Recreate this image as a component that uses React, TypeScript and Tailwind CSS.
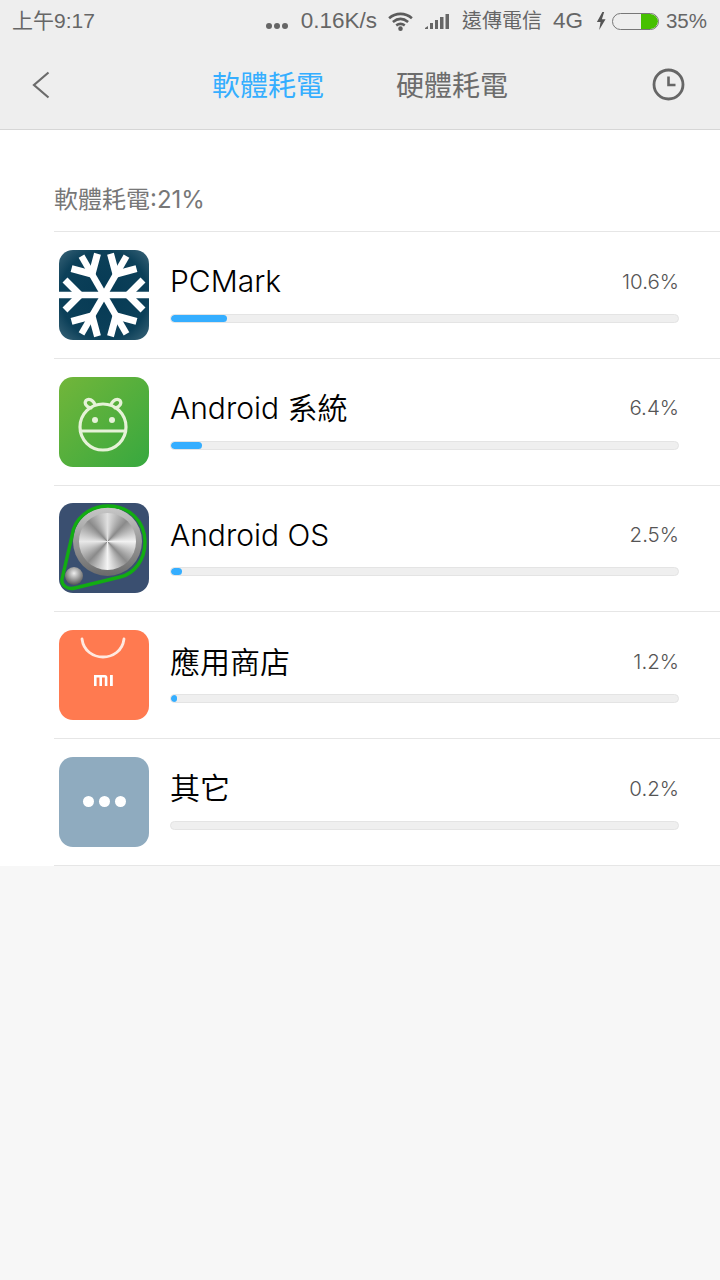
import type { ReactNode } from 'react';

const SnowIcon = () => (
    <svg viewBox="0 0 90 90" className="w-full h-full">
        <defs>
            <radialGradient id="snowBg" cx="50%" cy="50%" r="70%">
                <stop offset="0%" stopColor="#063a54" />
                <stop offset="70%" stopColor="#0c4059" />
                <stop offset="100%" stopColor="#3a6478" />
            </radialGradient>
        </defs>
        <rect width="90" height="90" fill="url(#snowBg)" />
        {[0, 60, 120, 180, 240, 300].map((a) => (
            <g key={a} transform={`rotate(${a} 45 45)`} stroke="#fff" strokeWidth="6.5" fill="none">
                <path d="M45 45H90" />
                <path d="M84 30L69 45L84 60" strokeWidth="7" />
            </g>
        ))}
    </svg>
);

const RobotIcon = () => (
    <svg viewBox="0 0 90 90" className="w-full h-full">
        <defs>
            <linearGradient id="robotBg" x1="0" y1="0" x2="1" y2="1">
                <stop offset="0%" stopColor="#72b63a" />
                <stop offset="100%" stopColor="#37a83f" />
            </linearGradient>
        </defs>
        <rect width="90" height="90" fill="url(#robotBg)" />
        <g stroke="#e6f2d8" strokeWidth="3.2" fill="none" strokeLinecap="round">
            <circle cx="44" cy="50" r="23" />
            <path d="M21.5 54H66.5" />
            <path d="M32 31C27 30 25 26 27 23.5C29.5 21 34 22.5 36 27.5" />
            <path d="M56 31C61 30 63 26 61 23.5C58.5 21 54 22.5 52 27.5" />
        </g>
        <circle cx="36" cy="43" r="3" fill="#e6f2d8" />
        <circle cx="53" cy="43" r="3" fill="#e6f2d8" />
    </svg>
);

const KnobIcon = () => (
    <div className="relative w-full h-full bg-[#3a4f70]">
        <div className="absolute left-[14px] top-[4px] w-[69px] h-[69px] rounded-full bg-[linear-gradient(#c8c8c8,#6a6a6a)] flex items-center justify-center">
            <div className="w-[57px] h-[57px] rounded-full bg-[conic-gradient(#e0e0e0,#8a8a8a_12%,#f2f2f2_25%,#8c8c8c_38%,#f4f4f4_50%,#8a8a8a_62%,#e8e8e8_75%,#8a8a8a_88%,#e0e0e0)]" />
        </div>
        <div className="absolute left-[6px] top-[64px] w-[18px] h-[18px] rounded-full bg-[radial-gradient(circle_at_50%_35%,#eeeeee,#5c5c5c_75%)]" />
        <svg viewBox="0 0 90 90" className="absolute inset-0 w-full h-full">
            <path d="M13 33C15 15 31 3 49 3C70 3 86 18 86 39C86 57 75 71 61 74L16 85C8 87 2 82 3 76Z" fill="none" stroke="#12ad12" strokeWidth="3.4" />
        </svg>
    </div>
);

const StoreIcon = () => (
    <svg viewBox="0 0 90 90" className="w-full h-full">
        <rect width="90" height="90" fill="#ff7a50" />
        <path d="M23 9C26 33 62 33 65 9" fill="none" stroke="#ffe9e0" strokeWidth="2.8" strokeLinecap="round" />
        <path d="M35 45H46C47.5 45 48.4 46 48.4 47.5V56H45.8V47.6H43V56H40.4V47.6H37.6V56H35Z" fill="#fff" />
        <rect x="51" y="45" width="2.8" height="11" fill="#fff" />
    </svg>
);

const MoreIcon = () => (
    <div className="w-full h-full bg-[#8fabbf] flex items-center justify-center gap-[5px]">
        <span className="w-[11px] h-[11px] rounded-full bg-white" />
        <span className="w-[11px] h-[11px] rounded-full bg-white" />
        <span className="w-[11px] h-[11px] rounded-full bg-white" />
    </div>
);

const rows: { icon: ReactNode; name: string; pct: string; bar: string }[] = [
    { icon: <SnowIcon />, name: 'PCMark', pct: '10.6%', bar: 'w-[56px]' },
    { icon: <RobotIcon />, name: 'Android 系統', pct: '6.4%', bar: 'w-[31px]' },
    { icon: <KnobIcon />, name: 'Android OS', pct: '2.5%', bar: 'w-[11px]' },
    { icon: <StoreIcon />, name: '應用商店', pct: '1.2%', bar: 'w-[6px]' },
    { icon: <MoreIcon />, name: '其它', pct: '0.2%', bar: 'w-0' },
];

const StatusBar = () => (
    <div className="h-[42px] flex items-center justify-between pl-[12px] pr-[13px] text-[#666] text-[21px] font-['Liberation_Sans','Noto_Sans_CJK_TC',sans-serif]">
        <span>上午9:17</span>
        <div className="flex items-center">
            <span className="flex gap-[2px] mr-[13px] mt-[10px]">
                <i className="w-[6px] h-[6px] rounded-full bg-[#666]" />
                <i className="w-[6px] h-[6px] rounded-full bg-[#666]" />
                <i className="w-[6px] h-[6px] rounded-full bg-[#666]" />
            </span>
            <span className="mr-[11px] text-[22.5px]">0.16K/s</span>
            <svg width="25" height="19" viewBox="0 0 26 20" className="mr-[12px]" fill="none" stroke="#5c5c5c" strokeWidth="2.8">
                <path d="M1 6.5C8 0.5 18 0.5 25 6.5" />
                <path d="M5 10.5C10 6.5 16 6.5 21 10.5" />
                <path d="M8.5 14C11.5 12 14.5 12 17.5 14" />
                <circle cx="13" cy="17.5" r="2.4" fill="#5c5c5c" stroke="none" />
            </svg>
            <svg width="25" height="16" viewBox="0 0 25 16" className="mr-[12px]" fill="#666">
                <path d="M0 15L3 13V16H0Z" />
                <rect x="5" y="10" width="3" height="6" />
                <rect x="10" y="7" width="3" height="9" />
                <rect x="15" y="4" width="3.5" height="12" />
                <rect x="20.5" y="1" width="3.5" height="15" />
            </svg>
            <span className="mr-[11px] text-[20px]">遠傳電信</span>
            <span className="mr-[13px] text-[22.5px]">4G</span>
            <svg width="10" height="20" viewBox="0 0 11 20" fill="#555" className="mr-[6px]">
                <path d="M7 0L1 11H5L3.5 20L10.5 8H6.5L9 0Z" />
            </svg>
            <span className="w-[47px] h-[17px] border-[1.5px] border-[#777] rounded-full flex justify-end mr-[7px] overflow-hidden">
                <span className="w-[17px] h-full bg-[#46c000] rounded-r-full" />
            </span>
            <span className="text-[20.5px]">35%</span>
        </div>
    </div>
);

const NavBar = () => (
    <div className="h-[87px] flex items-center justify-between pl-[32px] pr-[35px] pb-[2px]">
        <div className="w-[100px]">
            <svg width="18" height="28" viewBox="0 0 18 28" fill="none" stroke="#6b6b6b" strokeWidth="2.2">
                <path d="M16.5 1.5L2 14L16.5 26.5" />
            </svg>
        </div>
        <div className="flex gap-[72px] text-[28px] mt-[3px] ml-[3px]">
            <span className="text-[#35aeff]">軟體耗電</span>
            <span className="text-[#6c6c6c]">硬體耗電</span>
        </div>
        <div className="w-[100px] flex justify-end">
            <svg width="33" height="33" viewBox="0 0 33 33" fill="none" stroke="#666" strokeWidth="2.8">
                <circle cx="16.5" cy="16.5" r="14.5" />
                <path d="M16.5 8.5V17H23.5" strokeWidth="2.6" />
            </svg>
        </div>
    </div>
);

const UsageRow = ({ icon, name, pct, bar }: { icon: ReactNode; name: string; pct: string; bar: string }) => (
    <div className="h-[126.75px] border-b border-[#e6e6e6] flex items-center pl-[5px] pr-[41px]">
        <div className="w-[90px] h-[90px] rounded-[14px] overflow-hidden shrink-0">{icon}</div>
        <div className="flex-1 ml-[21px] pb-[5px]">
            <div className="flex items-center justify-between h-[40px]">
                <span className="text-[30px] text-black font-[350]">{name}</span>
                <span className="text-[20.5px] text-[#555] font-light">{pct}</span>
            </div>
            <div className="h-[9px] mt-[12px] rounded-full bg-[#efefef] border border-[#e4e4e4] overflow-hidden">
                <div className={`${bar} h-full rounded-full bg-[#35aeff]`} />
            </div>
        </div>
    </div>
);

export default function App() {
    return (
        <div className="font-['Inter','Noto_Sans_CJK_TC',sans-serif] w-[720px] h-[1280px] bg-[#f7f7f7] overflow-hidden">
            <div className="bg-[#eeeeee] border-b border-[#d6d6d6] h-[130px]">
                <StatusBar />
                <NavBar />
            </div>
            <div className="bg-white pl-[54px]">
                <div className="h-[102px] flex items-end pb-[13px] text-[24px] text-[#777] border-b border-[#e6e6e6]">軟體耗電:21%</div>
                {rows.map((r) => (
                    <UsageRow key={r.name} {...r} />
                ))}
            </div>
        </div>
    );
}
